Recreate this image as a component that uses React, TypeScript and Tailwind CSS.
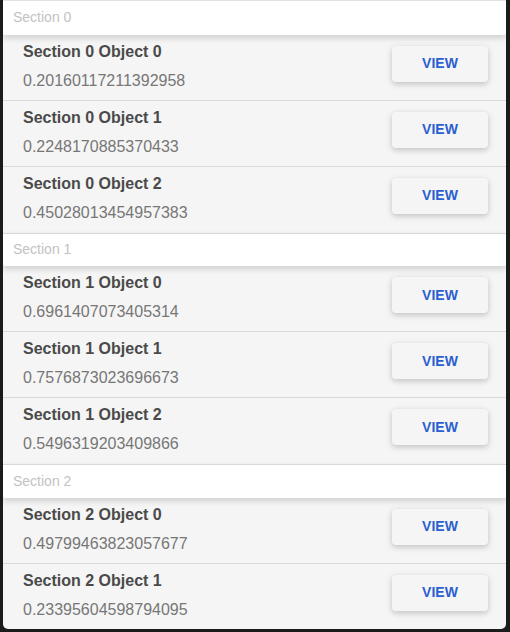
import React from "react";

const sections = [
  ["0.20160117211392958", "0.2248170885370433", "0.45028013454957383"],
  ["0.6961407073405314", "0.7576873023696673", "0.5496319203409866"],
  ["0.49799463823057677", "0.23395604598794095"],
];

function Row({ title, value, last }: { title: string; value: string; last: boolean }) {
  return (
    <div
      className={`flex h-[66px] shrink-0 items-start justify-between pl-[20px] pr-[18px] ${
        last ? "" : "border-b border-[#d9d9d9]"
      }`}
    >
      <div className="flex flex-col pt-[5px]">
        <div className="text-[16px] font-bold leading-[24px] text-[#4a4a4a]">{title}</div>
        <div className="mt-[5px] text-[16px] leading-[24px] text-[#777777]">{value}</div>
      </div>
      <button className="mt-[11px] flex h-[36px] w-[96px] items-center justify-center rounded-[4px] bg-[#f5f5f5] text-[14px] font-bold text-[#2b5fd0] shadow-[0_2px_6px_rgba(0,0,0,0.22)]">
        VIEW
      </button>
    </div>
  );
}

export default function App() {
  return (
    <div
      className="h-[632px] w-[510px] overflow-hidden bg-[#1b1b1b] pl-[3px]"
      style={{ fontFamily: '"Liberation Sans", Arial, sans-serif' }}
    >
      <div className="flex h-[629px] w-[503px] flex-col overflow-hidden rounded-b-[5px] border-t border-[#e2e2e2] bg-[#f5f5f5]">
        {sections.map((vals, s) => (
          <div key={s} className="flex shrink-0 flex-col">
            <div
              className={`relative z-10 flex h-[33.5px] shrink-0 items-center rounded-b-[2px] bg-white pl-[10px] text-[14px] text-[#c2c2c2] shadow-[0_3px_6px_rgba(0,0,0,0.16)] ${
                s === 0 ? "" : "border-t border-[#d9d9d9]"
              }`}
            >
              Section {s}
            </div>
            {vals.map((v, i) => (
              <Row key={i} title={`Section ${s} Object ${i}`} value={v} last={i === vals.length - 1} />
            ))}
          </div>
        ))}
      </div>
    </div>
  );
}
